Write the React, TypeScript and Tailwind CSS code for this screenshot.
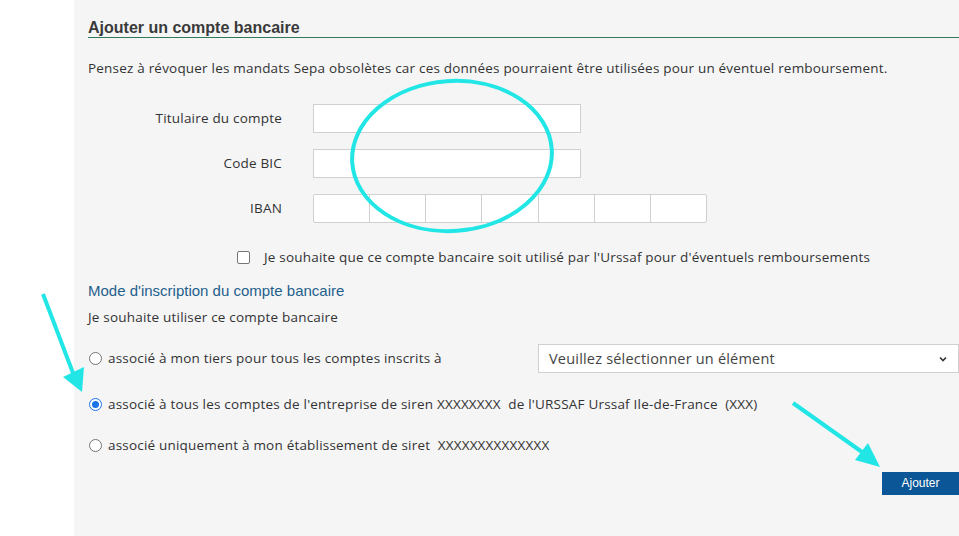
const body = { fontFamily: '"Open Sans", "Noto Sans", sans-serif' };
const arial = { fontFamily: '"Liberation Sans", Arial, sans-serif' };

const Row = ({ label, children }: { label: string; children: React.ReactNode }) => (
  <div className="flex items-center h-[29px]">
    <div className="w-[194px] text-right text-[13.5px] tracking-[0.2px] text-[#333]">{label}</div>
    <div className="ml-[31px]">{children}</div>
  </div>
);

const Radio = ({ checked }: { checked?: boolean }) => (
  <span
    className={
      "inline-flex w-[13px] h-[13px] rounded-full border items-center justify-center bg-white shrink-0 " +
      (checked ? "border-[#1a73e8]" : "border-[#767676]")
    }
  >
    {checked && <span className="w-[7px] h-[7px] rounded-full bg-[#1a73e8]" />}
  </span>
);

export default function App() {
  return (
    <div className="relative w-[959px] h-[536px] overflow-hidden bg-white flex" style={body}>
      <div className="w-[74px] shrink-0 bg-white" />
      <div className="flex-1 bg-[#f5f5f6] pl-[14px] text-[13.5px] tracking-[0.2px] text-[#333]">
        <div className="pt-[19px] pb-0 border-b border-[#2f7a58]">
          <h2 className="text-[16px] font-bold text-[#3a3a3a] leading-[18px] tracking-normal" style={arial}>
            Ajouter un compte bancaire
          </h2>
        </div>
        <p className="mt-[21px] leading-[18px]">
          Pensez à révoquer les mandats Sepa obsolètes car ces données pourraient être utilisées pour un éventuel remboursement.
        </p>

        <div className="mt-[27px] flex flex-col gap-[16px]">
          <Row label="Titulaire du compte">
            <div className="w-[268px] h-[29px] bg-white border border-[#d0d0d0]" />
          </Row>
          <Row label="Code BIC">
            <div className="w-[268px] h-[29px] bg-white border border-[#d0d0d0]" />
          </Row>
          <Row label="IBAN">
            <div className="flex w-[394px] h-[29px] bg-white border border-[#d0d0d0] rounded-[2px]">
              {[0, 1, 2, 3, 4, 5, 6].map((i) => (
                <div key={i} className={"flex-1 " + (i < 6 ? "border-r border-[#d0d0d0]" : "")} />
              ))}
            </div>
          </Row>
        </div>

        <div className="mt-[24px] flex items-center pl-[149px]">
          <span className="w-[13px] h-[13px] border border-[#767676] rounded-[2px] bg-white" />
          <span className="ml-[14px]">
            Je souhaite que ce compte bancaire soit utilisé par l'Urssaf pour d'éventuels remboursements
          </span>
        </div>

        <div className="mt-[13px] text-[15px] tracking-normal text-[#1f5f8b]" style={arial}>
          Mode d'inscription du compte bancaire
        </div>
        <div className="mt-[4px]">Je souhaite utiliser ce compte bancaire</div>

        <div className="mt-[17px] flex items-center pl-[1px]">
          <Radio />
          <span className="ml-[6px]">associé à mon tiers pour tous les comptes inscrits à</span>
          <div className="ml-auto w-[421px] h-[29px] bg-white border border-[#d0d0d0] flex items-center px-[10px] justify-between">
            <span className="text-[14.5px] text-[#444]">Veuillez sélectionner un élément</span>
            <svg width="10" height="10" viewBox="0 0 10 10">
              <path d="M2 3.5 L5 6.5 L8 3.5" fill="none" stroke="#333" strokeWidth="1.6" />
            </svg>
          </div>
        </div>

        <div className="mt-[21px] flex items-center pl-[1px]">
          <Radio checked />
          <span className="ml-[6px] whitespace-pre">
            associé à tous les comptes de l'entreprise de siren XXXXXXXX  de l'URSSAF Urssaf Ile-de-France  (XXX)
          </span>
        </div>

        <div className="mt-[21px] flex items-center pl-[1px]">
          <Radio />
          <span className="ml-[6px] whitespace-pre">
            associé uniquement à mon établissement de siret  XXXXXXXXXXXXXX
          </span>
        </div>

        <div className="mt-[16px] flex justify-end">
          <button className="w-[77px] h-[23px] bg-[#0b5696] text-white text-[12px] tracking-normal" style={arial}>
            Ajouter
          </button>
        </div>
      </div>

      <svg className="absolute inset-0 pointer-events-none" width="959" height="536">
        <ellipse cx="452" cy="156" rx="100" ry="75" fill="none" stroke="#22e6e6" strokeWidth="4" transform="rotate(-4 452 156)" />
        <line x1="43" y1="294" x2="73" y2="373" stroke="#22e6e6" strokeWidth="4" />
        <polygon points="63,377 82,392 84,367" fill="#22e6e6" />
        <line x1="793" y1="403" x2="862" y2="452" stroke="#22e6e6" strokeWidth="4" />
        <polygon points="855,460 880,467 868,443" fill="#22e6e6" />
      </svg>
    </div>
  );
}
